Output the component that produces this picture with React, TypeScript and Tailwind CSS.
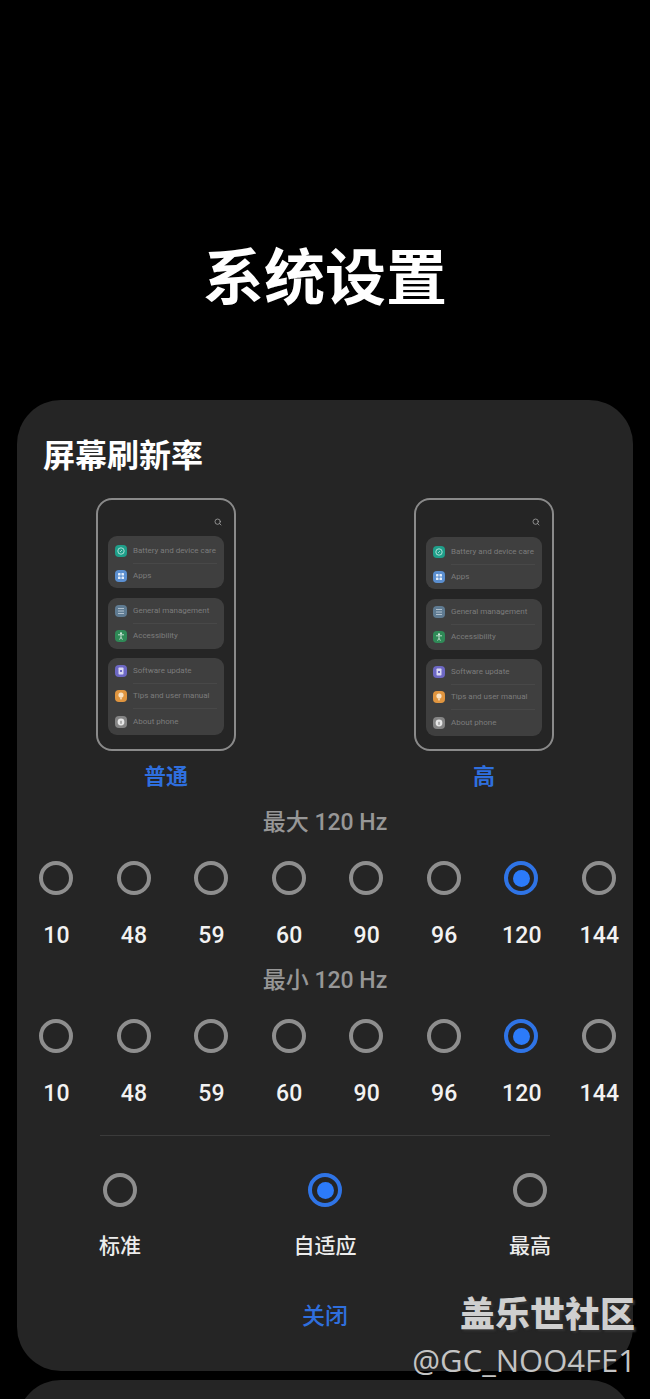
import { Search } from 'lucide-react'
import type { ReactNode } from 'react'

const cjk = "font-['Roboto','Noto_Sans_CJK_SC',sans-serif]"
const rates = ['10', '48', '59', '60', '90', '96', '120', '144']

function Radio({ on }: { on?: boolean }) {
  return (
    <span className={`flex h-[34px] w-[34px] items-center justify-center rounded-full border-4 ${on ? 'border-[#2f74e6]' : 'border-[#8e8e8e]'}`}>
      {on && <span className="h-[17px] w-[17px] rounded-full bg-[#2c7bfa]" />}
    </span>
  )
}

function AppIcon({ bg, children }: { bg: string; children: ReactNode }) {
  return (
    <span className={`flex h-[12px] w-[12px] shrink-0 items-center justify-center rounded-[4px] ${bg}`}>
      <svg viewBox="0 0 12 12" className="h-[12px] w-[12px]" fill="none">
        {children}
      </svg>
    </span>
  )
}

const icons = {
  battery: (
    <AppIcon bg="bg-[#1f9f8a]">
      <circle cx="6" cy="6" r="3.2" stroke="#cfeee8" strokeWidth="0.8" />
      <path d="M5 7l2-2" stroke="#cfeee8" strokeWidth="0.7" />
    </AppIcon>
  ),
  apps: (
    <AppIcon bg="bg-[#5b8fd0]">
      <rect x="3" y="3" width="2.5" height="2.5" rx="0.6" fill="#e4eefa" />
      <rect x="6.5" y="3" width="2.5" height="2.5" rx="0.6" fill="#e4eefa" />
      <rect x="3" y="6.5" width="2.5" height="2.5" rx="0.6" fill="#e4eefa" />
      <rect x="6.5" y="6.5" width="2.5" height="2.5" rx="0.6" fill="#e4eefa" />
    </AppIcon>
  ),
  general: (
    <AppIcon bg="bg-[#5f7b92]">
      <path d="M3 3.5h6M3 6h6M3 8.5h6" stroke="#d5dee6" strokeWidth="0.7" />
    </AppIcon>
  ),
  access: (
    <AppIcon bg="bg-[#2f8a57]">
      <circle cx="6" cy="3.2" r="1" fill="#e2f2e8" />
      <path d="M3 4.8h6M6 4.8v2.4M6 7.2L4.6 9.6M6 7.2l1.4 2.4" stroke="#e2f2e8" strokeWidth="0.8" />
    </AppIcon>
  ),
  update: (
    <AppIcon bg="bg-[#6d68c4]">
      <rect x="3.5" y="2.5" width="5" height="7" rx="0.8" fill="#d9d8f2" />
      <rect x="5" y="5" width="2" height="2" fill="#6d68c4" />
    </AppIcon>
  ),
  tips: (
    <AppIcon bg="bg-[#e0953f]">
      <circle cx="6" cy="5" r="2.6" fill="#f8e2c4" />
      <rect x="5.2" y="7.4" width="1.6" height="2" fill="#f8e2c4" />
    </AppIcon>
  ),
  about: (
    <AppIcon bg="bg-[#858585]">
      <circle cx="6" cy="6" r="3.4" fill="#e6e6e6" />
      <rect x="5.5" y="4.8" width="1" height="3" fill="#777777" />
    </AppIcon>
  ),
}

function PhoneRow({ icon, label, line }: { icon: ReactNode; label: string; line?: boolean }) {
  return (
    <div className="relative flex h-[25.5px] items-center gap-[6px] pl-[7px]">
      {icon}
      <span className="whitespace-nowrap font-['Roboto',sans-serif] text-[8px] text-[#7c7c7c]">{label}</span>
      {line && <span className="absolute bottom-0 left-[25px] right-[7px] h-px bg-[#484848]" />}
    </div>
  )
}

function Phone({ title, low }: { title: string; low?: boolean }) {
  return (
    <div className="flex w-[140px] flex-col items-center">
      <div className="flex h-[253px] w-[140px] flex-col rounded-[16px] border-2 border-[#8a8a8a] px-[10px]">
        <div className={`flex items-start justify-end pr-[2px] pt-[18px] ${low ? 'h-[37px]' : 'h-[36px]'}`}>
          <Search className="h-[8px] w-[8px] text-[#a0a0a0]" strokeWidth={2.5} />
        </div>
        <div className="flex flex-col">
          <div className="h-[52px] rounded-[9px] bg-[#3f3f3f] pt-[2px]">
            <PhoneRow icon={icons.battery} label="Battery and device care" line />
            <PhoneRow icon={icons.apps} label="Apps" />
          </div>
          <div className="mt-[10px] rounded-[9px] bg-[#3f3f3f]">
            <PhoneRow icon={icons.general} label="General management" line />
            <PhoneRow icon={icons.access} label="Accessibility" />
          </div>
          <div className="mt-[9px] rounded-[9px] bg-[#3f3f3f]">
            <PhoneRow icon={icons.update} label="Software update" line />
            <PhoneRow icon={icons.tips} label="Tips and user manual" line />
            <PhoneRow icon={icons.about} label="About phone" />
          </div>
        </div>
      </div>
      <div className={`mt-[10px] text-[22px] font-bold leading-[32px] text-[#2f6fde] ${cjk}`}>{title}</div>
    </div>
  )
}

function RateRow({ heading }: { heading: string }) {
  return (
    <div>
      <div className={`text-center text-[23px] font-medium leading-[32px] text-[#979797] ${cjk}`}>{heading}</div>
      <div className="mt-[22px] flex justify-between pl-[22px] pr-[17px]">
        {rates.map((r) => (
          <div key={r} className="flex w-[34px] flex-col items-center">
            <Radio on={r === '120'} />
            <span className="ml-[1px] mt-[27px] whitespace-nowrap font-['Roboto',sans-serif] text-[23px] font-medium leading-[28px] tracking-[0.2px] text-[#f2f2f2]">{r}</span>
          </div>
        ))}
      </div>
    </div>
  )
}

function ModeOption({ label, on }: { label: string; on?: boolean }) {
  return (
    <div className="flex w-[34px] flex-col items-center">
      <Radio on={on} />
      <span className={`mt-[24px] whitespace-nowrap text-[21px] font-medium leading-[30px] text-[#ececec] ${cjk}`}>{label}</span>
    </div>
  )
}

export default function App() {
  return (
    <div className="relative h-[1399px] w-[650px] overflow-hidden bg-black">
      <div className="flex h-[400px] items-center justify-center pt-[158px]">
        <h1 className={`text-[61px] font-bold leading-none text-white ${cjk}`}>系统设置</h1>
      </div>

      <section className="mx-[17px] h-[971px] rounded-[44px] bg-[#252525] pt-[36px]">
        <h2 className={`pl-[26px] text-[32px] font-bold leading-[40px] text-white ${cjk}`}>屏幕刷新率</h2>
        <div className="mt-[22px] flex justify-between pl-[79px] pr-[79px]">
          <Phone title="普通" />
          <Phone title="高" low />
        </div>
        <div className="mt-[14px] flex flex-col gap-[15px]">
          <RateRow heading="最大 120 Hz" />
          <RateRow heading="最小 120 Hz" />
        </div>
        <div className="mx-[83px] mt-[27px] h-px bg-[#3b3b3b]" />
        <div className="mt-[37px] flex justify-between pl-[86px] pr-[86px]">
          <ModeOption label="标准" />
          <ModeOption label="自适应" on />
          <ModeOption label="最高" />
        </div>
        <div className={`mt-[40px] text-center text-[23px] font-medium leading-[32px] text-[#2f6fde] ${cjk}`}>关闭</div>
      </section>

      <div className="mx-[17px] mt-[9px] h-[60px] rounded-t-[44px] bg-[#252525]" />

      <div className="absolute bottom-[17px] right-[14px] flex flex-col items-end">
        <span className={`mr-[1px] text-[35px] font-black leading-[44px] text-[#cfcfcf] [text-shadow:2px_2px_2px_#333333] ${cjk}`}>盖乐世社区</span>
        <span className="font-['Open_Sans',sans-serif] text-[31px] font-normal leading-[44px] text-[#c4c4c4]">@GC_NOO4FE1</span>
      </div>
    </div>
  )
}
